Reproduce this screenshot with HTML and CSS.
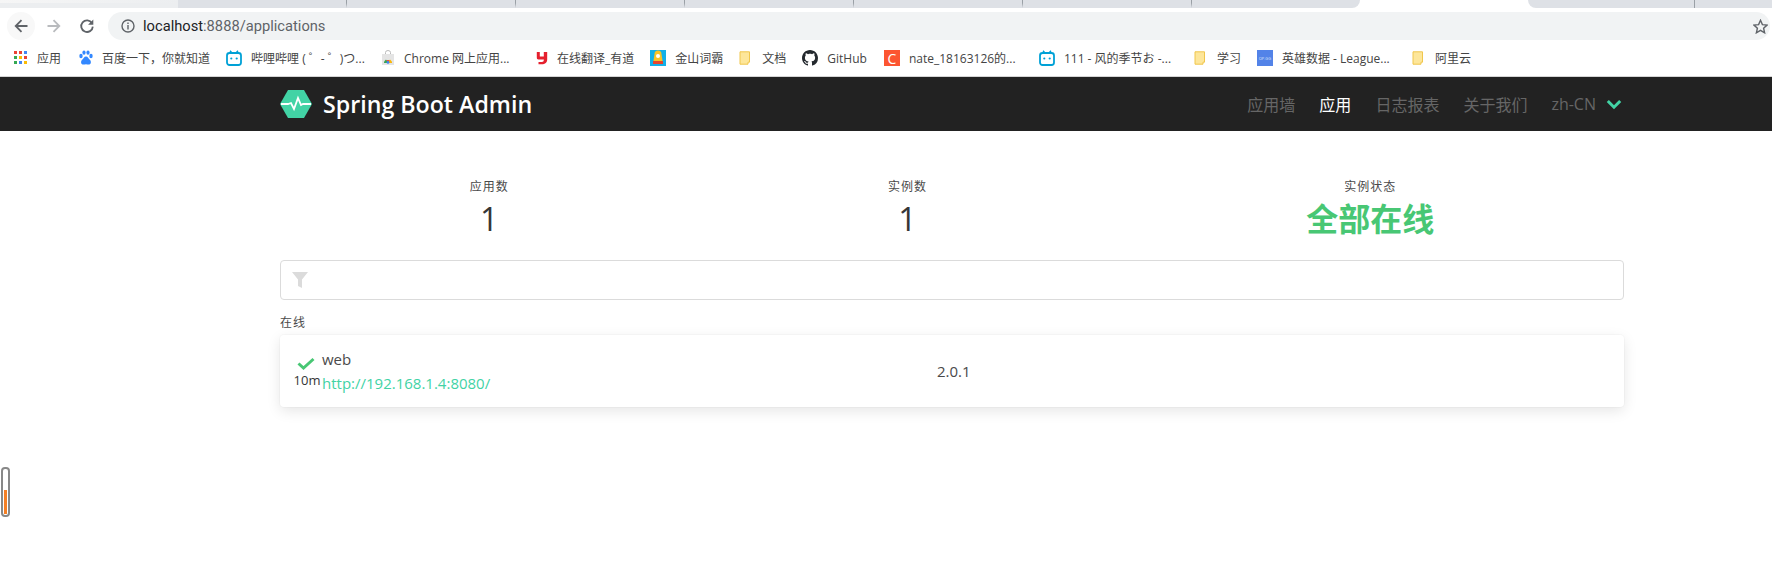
FILE: index.html
```html
<!DOCTYPE html>
<html lang="zh-CN">
<head>
    <meta charset="UTF-8">
    <title>Spring Boot Admin</title>
    <link rel="stylesheet" href="styles.css">
</head>
<body>
    <div class="tabstrip">
        <div class="tab tab-first"></div>
        <div class="tab tab-mid"></div>
        <div class="tab tab-mid"></div>
        <div class="tab tab-mid"></div>
        <div class="tab tab-mid"></div>
        <div class="tab tab-mid"></div>
        <div class="tab tab-mid"></div>
        <div class="tab tab-before"></div>
        <div class="tab tab-active"></div>
        <div class="tab tab-after"></div>
        <div class="tab tab-last"></div>
    </div>
    <div class="toolbar">
        <div class="tool-btn tool-back">
            <svg width="16" height="16" viewBox="0 0 16 16"><path d="M14.5 8H3M8.5 2.2 2.7 8l5.8 5.8" fill="none" stroke="#5f6368" stroke-width="1.8"/></svg>
        </div>
        <div class="tool-btn">
            <svg width="16" height="16" viewBox="0 0 16 16"><path d="M1.5 8H13M7.5 2.2 13.3 8l-5.8 5.8" fill="none" stroke="#b9bbbe" stroke-width="1.8"/></svg>
        </div>
        <div class="tool-btn">
            <svg width="16" height="16" viewBox="0 0 16 16"><path d="M13 5.2A5.8 5.8 0 1 0 13.8 8.6" fill="none" stroke="#5f6368" stroke-width="1.8"/><path d="M14.3 1.5v5.2H9.1z" fill="#5f6368"/></svg>
        </div>
        <div class="address">
            <svg class="info-icon" width="14" height="14" viewBox="0 0 14 14"><circle cx="7" cy="7" r="6" fill="none" stroke="#5f6368" stroke-width="1.4"/><path d="M7 6v4.4M7 3.4v1.5" stroke="#5f6368" stroke-width="1.4"/></svg>
            <span class="host">localhost</span><span class="url-rest">:8888/applications</span>
            <svg class="star" width="15" height="15" viewBox="0 0 15 15"><path d="M7.5 1.3 9.4 5.6l4.6.5-3.4 3.1 1 4.6-4.1-2.4-4.1 2.4 1-4.6L1 6.1l4.600-.5z" fill="none" stroke="#5f6368" stroke-width="1.4"/></svg>
        </div>
    </div>
    <div class="bookmarks">
        <a class="bm bm-apps">
            <svg width="14" height="14" viewBox="0 0 14 14">
                <rect x="0" y="0" width="3" height="3" fill="#ea4335"/><rect x="5" y="0" width="3" height="3" fill="#ea4335"/><rect x="10" y="0" width="3" height="3" fill="#4285f4"/>
                <rect x="0" y="5" width="3" height="3" fill="#34a853"/><rect x="5" y="5" width="3" height="3" fill="#fbbc05"/><rect x="10" y="5" width="3" height="3" fill="#ea4335"/>
                <rect x="0" y="10" width="3" height="3" fill="#34a853"/><rect x="5" y="10" width="3" height="3" fill="#4285f4"/><rect x="10" y="10" width="3" height="3" fill="#fbbc05"/>
            </svg>
            应用
        </a>
        <a class="bm">
            <svg width="14" height="16" viewBox="0 0 14 16" fill="#3388ff"><ellipse cx="2" cy="6" rx="1.7" ry="2.2"/><ellipse cx="5" cy="2.6" rx="1.6" ry="2.2"/><ellipse cx="9" cy="2.6" rx="1.6" ry="2.2"/><ellipse cx="12" cy="6" rx="1.7" ry="2.2"/><path d="M7 6.5c-2 0-2.4 2-3.8 3.2C1.6 11 1.5 14.6 4.5 14.6c1 0 1.6-.4 2.5-.4s1.500.4 2.500.4c3 0 2.900-3.600 1.300-4.900C9.400 8.500 9 6.500 7 6.500z"/></svg>
            百度一下，你就知道
        </a>
        <a class="bm bm-long">
            <svg width="16" height="16" viewBox="0 0 16 16"><path d="M4 .8 6 3M12 .8 10 3" stroke="#00a1d6" stroke-width="1.4"/><rect x="1" y="3" width="14" height="12" rx="2.500" fill="none" stroke="#00a1d6" stroke-width="1.800"/><circle cx="5.300" cy="8.500" r="1.100" fill="#00a1d6"/><circle cx="10.700" cy="8.500" r="1.100" fill="#00a1d6"/></svg>
            哔哩哔哩 ( ゜- ゜)つ...
        </a>
        <a class="bm bm-long">
            <svg width="14" height="16" viewBox="0 0 14 16"><path d="M4.500 4V2.500a2.500 2 0 0 1 5 0V4" fill="none" stroke="#bbb"/><rect x="1" y="4" width="12" height="11" fill="#e4e4e4"/><path d="M3 13a4.200 4.200 0 0 1 8 0z" fill="#ea4335"/><path d="M3 13a4.200 4.200 0 0 1 2-3.500L7 13z" fill="#34a853"/><path d="M7 13l2-3.500a4.200 4.200 0 0 1 2 3.500z" fill="#fbbc05"/><circle cx="7" cy="12.400" r="1.400" fill="#4285f4"/></svg>
            Chrome 网上应用...
        </a>
        <a class="bm">
            <svg width="12" height="14" viewBox="0 0 12 14"><path d="M.8 1h3v4.500h4V1h3.400v7.500c0 3-2 4.800-5.500 4.800H2.500v-2.300h3.300c1.500 0 2-.800 2.100-2.500H2.500C1.200 8.500.8 7.800.8 6.500z" fill="#e5202e"/></svg>
            在线翻译_有道
        </a>
        <a class="bm">
            <svg width="16" height="16" viewBox="0 0 16 16"><rect width="16" height="16" fill="#12b0e8"/><path d="M3 14 4.500 4a3.500 3.500 0 0 1 7 0L13 14z" fill="#f7c325"/><circle cx="8" cy="6" r="2" fill="#fff"/><rect x="3" y="11" width="10" height="3" fill="#e5462d"/></svg>
            金山词霸
        </a>
        <a class="bm">
            <svg class="folder" width="12" height="14" viewBox="0 0 12 14"><path d="M1 .8h9.500v10.400H9v2H1z" fill="#fde69a" stroke="#f0c64c"/></svg>
            文档
        </a>
        <a class="bm bm-git">
            <svg width="16" height="16" viewBox="0 0 16 16"><path fill="#24292e" d="M8 0C3.580 0 0 3.580 0 8c0 3.540 2.290 6.530 5.470 7.590.4.070.55-.17.55-.38 0-.19-.01-.82-.01-1.490-2.010.37-2.530-.49-2.690-.94-.09-.23-.48-.94-.82-1.130-.28-.15-.68-.52-.01-.53.630-.01 1.080.58 1.230.82.720 1.210 1.870.87 2.330.66.070-.52.280-.87.510-1.070-1.780-.2-3.640-.89-3.640-3.950 0-.87.310-1.590.820-2.150-.08-.2-.36-1.020.08-2.120 0 0 .67-.21 2.200.82.640-.18 1.320-.27 2-.27s1.360.09 2 .27c1.530-1.040 2.200-.82 2.200-.82.440 1.100.160 1.920.08 2.120.510.560.820 1.270.820 2.150 0 3.070-1.870 3.750-3.650 3.950.290.250.540.730.540 1.480 0 1.070-.01 1.930-.01 2.200 0 .210.150.460.550.380A8.010 8.010 0 0 0 16 8c0-4.420-3.580-8-8-8z"/></svg>
            GitHub
        </a>
        <a class="bm bm-long">
            <span class="csdn-icon">C</span>
            nate_18163126的...
        </a>
        <a class="bm bm-long">
            <svg width="16" height="16" viewBox="0 0 16 16"><path d="M4 .8 6 3M12 .8 10 3" stroke="#00a1d6" stroke-width="1.400"/><rect x="1" y="3" width="14" height="12" rx="2.500" fill="none" stroke="#00a1d6" stroke-width="1.800"/><circle cx="5.300" cy="8.500" r="1.100" fill="#00a1d6"/><circle cx="10.700" cy="8.500" r="1.100" fill="#00a1d6"/></svg>
            111 - 风的季节お -...
        </a>
        <a class="bm">
            <svg class="folder" width="12" height="14" viewBox="0 0 12 14"><path d="M1 .8h9.500v10.400H9v2H1z" fill="#fde69a" stroke="#f0c64c"/></svg>
            学习
        </a>
        <a class="bm bm-long">
            <span class="opgg-icon">OP.GG</span>
            英雄数据 - League...
        </a>
        <a class="bm">
            <svg class="folder" width="12" height="14" viewBox="0 0 12 14"><path d="M1 .8h9.500v10.400H9v2H1z" fill="#fde69a" stroke="#f0c64c"/></svg>
            阿里云
        </a>
    </div>

    <nav class="navbar">
        <div class="container navbar-inner">
            <div class="brand">
                <svg width="32" height="28" viewBox="0 0 32 28">
                    <path d="M8 0h16l8 14-8 14H8L0 14z" fill="#42d3a5"/>
                    <path d="M1 14h7l3-1 3 6 4-11 3 7 2-1h8" fill="none" stroke="#fff" stroke-width="1.800"/>
                </svg>
                <span class="brand-name">Spring Boot Admin</span>
            </div>
            <div class="nav-menu">
                <a class="nav-item">应用墙</a>
                <a class="nav-item is-active">应用</a>
                <a class="nav-item">日志报表</a>
                <a class="nav-item">关于我们</a>
                <a class="nav-item nav-lang">zh-CN
                    <svg width="16" height="11" viewBox="0 0 16 11"><path d="M1.800 2 8 8.200 14.200 2" fill="none" stroke="#42d3a5" stroke-width="3"/></svg>
                </a>
            </div>
        </div>
    </nav>

    <main class="container main">
        <div class="level">
            <div class="level-item">
                <p class="heading">应用数</p>
                <p class="title">1</p>
            </div>
            <div class="level-item">
                <p class="heading">实例数</p>
                <p class="title">1</p>
            </div>
            <div class="level-item">
                <p class="heading">实例状态</p>
                <p class="title status-up">全部在线</p>
            </div>
        </div>
        <div class="filter">
            <svg width="16" height="16" viewBox="0 0 16 16"><path d="M0 0h16L10 7.500V16l-4-2V7.500z" fill="#dbdbdb"/></svg>
        </div>
        <div class="group-title">在线</div>
        <div class="box app-row">
            <div class="app-status">
                <svg class="check" width="18" height="13" viewBox="0 0 18 13"><path d="M1.500 6.500 6.500 11 16.500 2" fill="none" stroke="#48c774" stroke-width="3"/></svg>
                <span class="uptime">10m</span>
            </div>
            <div class="app-name">
                <div>web</div>
                <a class="app-url">http://192.168.1.4:8080/</a>
            </div>
            <div class="app-version">2.0.1</div>
        </div>
    </main>

    <div class="thermo"><div class="thermo-fill"></div></div>
</body>
</html>
```

FILE: styles.css
```css
:root {
    --primary: #42d3a5;
    --success: #48c774;
    --dark: #222;
    --text: #4a4a4a;
}
* {
    box-sizing: border-box;
}
body {
    margin: 0;
    min-height: 100vh;
    background: #fff;
    color: var(--text);
    font-family: "Open Sans", "Noto Sans CJK SC", sans-serif;
}
p {
    margin: 0;
}

/* browser chrome */
.tabstrip {
    display: flex;
    height: 8px;
    background: #fff;
}
.tab {
    background: #dee1e6;
    border-right: 1px solid #9aa0a6;
    border-bottom: 5px solid #dee1e6;
}
.tab-first {
    width: 178px;
    border-right: none;
    background: linear-gradient(90deg, #f6f6f6, #eceef0);
    border-bottom-color: #eceef0;
}
.tab-mid {
    width: 169px;
}
.tab-before {
    width: 168px;
    border-right: none;
    border-radius: 0 0 8px 0;
    border-bottom: none;
}
.tab-active {
    width: 168px;
    background: #fff;
    border: none;
}
.tab-after {
    width: 167px;
    border-radius: 0 0 0 8px;
    border-bottom: none;
    border-right: 1px solid #9aa0a6;
}
.tab-last {
    flex: 1;
    border: none;
}
.toolbar {
    display: flex;
    align-items: center;
    height: 32px;
    padding: 4px 0 0 7px;
}
.tool-btn {
    display: flex;
    align-items: center;
    justify-content: center;
    width: 28px;
    height: 28px;
    margin-right: 5px;
    border-radius: 50%;
}
.tool-back {
    background: #f8f8f8;
}
.address {
    display: flex;
    align-items: center;
    flex: 1;
    height: 28px;
    margin: 0 2px 0 2px;
    padding: 0 2px 0 13px;
    background: #f1f3f4;
    border-radius: 14px;
    font-family: "Roboto", sans-serif;
    font-size: 14.7px;
}
.info-icon {
    margin-right: 8px;
}
.host {
    color: #202124;
}
.url-rest {
    color: #5f6368;
}
.star {
    margin-left: auto;
}
.bookmarks {
    display: flex;
    align-items: center;
    height: 37px;
    padding-left: 14px;
    border-bottom: 1px solid #d5d5d5;
    font-size: 12px;
}
.bm {
    display: flex;
    align-items: center;
    gap: 9px;
    color: #444;
    white-space: nowrap;
    margin-right: 16px;
}
.bm-apps {
    margin-right: 18px;
}
.bm-git {
    margin-right: 17px;
}
.bm-long {
    width: 155px;
    margin-right: 0;
}
.folder {
    flex: none;
    margin-right: 2px;
}
.csdn-icon {
    display: flex;
    align-items: center;
    justify-content: center;
    width: 16px;
    height: 16px;
    background: #fc5531;
    color: #fff;
    font-size: 14px;
}
.opgg-icon {
    display: flex;
    align-items: center;
    justify-content: center;
    width: 16px;
    height: 16px;
    background: #5383e8;
    color: #dfe7fa;
    font-size: 4px;
}

/* app */
.container {
    width: 1344px;
    margin-left: 280px;
}
.navbar {
    height: 54px;
    background: var(--dark);
}
.navbar-inner {
    display: flex;
    align-items: center;
    justify-content: space-between;
    height: 100%;
}
.brand {
    display: flex;
    align-items: center;
    gap: 11px;
}
.brand-name {
    color: #fff;
    font-size: 23.2px;
    font-weight: 600;
}
.nav-menu {
    display: flex;
    align-items: center;
    gap: 24px;
    font-size: 16px;
}
.nav-item {
    color: #666;
}
.nav-item.is-active {
    color: #fff;
}
.nav-lang {
    display: flex;
    align-items: center;
    gap: 10px;
    padding-right: 2px;
}
.main {
    padding: 47px 0 60px;
}
.level {
    display: flex;
    text-align: center;
}
.level-item {
    flex: 1 1 auto;
}
.heading {
    font-size: 12px;
    letter-spacing: 1px;
    line-height: 17px;
    color: #4a4a4a;
}
.title {
    font-size: 32px;
    font-weight: 500;
    line-height: 48px;
    color: #363636;
}
.status-up {
    color: var(--success);
    font-weight: 700;
}
.filter {
    display: flex;
    align-items: center;
    height: 40px;
    margin-top: 17px;
    padding-left: 11px;
    border: 1px solid #dbdbdb;
    border-radius: 4px;
}
.group-title {
    margin-top: 14px;
    font-size: 12px;
    letter-spacing: 1px;
    line-height: 17px;
}
.box {
    background: #fff;
    border-radius: 4px;
    box-shadow: 0 4px 14px rgba(10, 10, 10, 0.1), 0 0 0 1px rgba(10, 10, 10, 0.02);
}
.app-row {
    display: grid;
    grid-template-columns: 30px 615px 1fr;
    align-items: center;
    height: 72px;
    margin-top: 4px;
    padding-left: 12px;
}
.app-status {
    display: flex;
    flex-direction: column;
    align-items: center;
    gap: 2px;
    font-size: 13px;
    color: #363636;
}
.check {
    margin-top: 2px;
    margin-left: -2px;
}
.uptime {
    line-height: 16px;
}
.app-name {
    font-size: 15px;
    line-height: 24px;
}
.app-url {
    color: var(--primary);
}
.app-version {
    font-size: 15px;
}

/* floating meter on the left edge */
.thermo {
    position: absolute;
    left: 1px;
    top: 467px;
    width: 9px;
    height: 50px;
    padding: 1px;
    display: flex;
    align-items: flex-end;
    border: 2px solid #888;
    border-radius: 4px;
}
.thermo-fill {
    width: 100%;
    height: 24px;
    background: #f58025;
}
```
